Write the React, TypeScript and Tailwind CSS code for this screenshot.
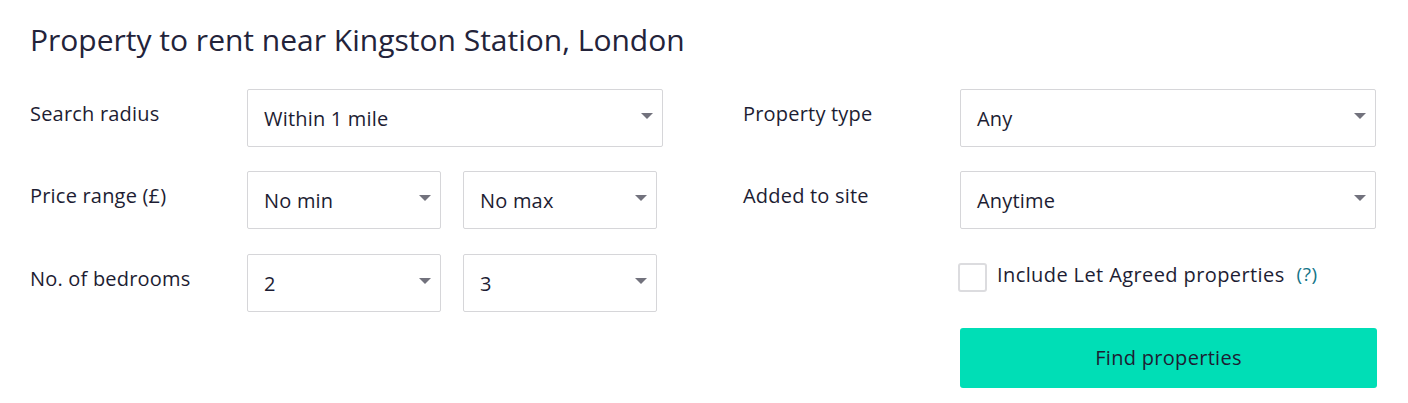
import React from 'react'

const font = { fontFamily: '"Open Sans", Arial, sans-serif' }

function Caret() {
  return (
    <svg width="12" height="6" viewBox="0 0 12 6" className="shrink-0 mb-[4px]">
      <path d="M0 0 L12 0 L6 6 Z" fill="#72727d" />
    </svg>
  )
}

function Select({ value, className = '' }: { value: string; className?: string }) {
  return (
    <div
      className={`h-[58px] flex items-center justify-between pl-4 pr-[9px] bg-white border border-[#d6d6d9] rounded-[2px] text-[20px] tracking-[0.2px] text-[#1d1d33] ${className}`}
    >
      <span className="pt-[1px]">{value}</span>
      <Caret />
    </div>
  )
}

function Label({ children }: { children: React.ReactNode }) {
  return (
    <div className="w-[217px] shrink-0 pt-[10px] text-[20px] leading-[30px] tracking-[0.2px] text-[#1d1d33]">
      {children}
    </div>
  )
}

export default function App() {
  return (
    <div className="w-[1408px] h-[403px] bg-white pl-[30px] pt-[20px]" style={font}>
      <h1 className="text-[30px] leading-[40px] text-[#23233a] tracking-[0px]">
        Property to rent near Kingston Station, London
      </h1>

      <div className="flex mt-[29px] gap-[80px]">
        {/* Left column */}
        <div className="flex flex-col w-[633px]">
          <div className="flex h-[58px]">
            <Label>Search radius</Label>
            <Select value="Within 1 mile" className="w-[416px]" />
          </div>
          <div className="flex h-[58px] mt-[24px]">
            <Label>Price range (£)</Label>
            <div className="flex gap-[22px]">
              <Select value="No min" className="w-[194px]" />
              <Select value="No max" className="w-[194px]" />
            </div>
          </div>
          <div className="flex h-[58px] mt-[25px]">
            <Label>No. of bedrooms</Label>
            <div className="flex gap-[22px]">
              <Select value="2" className="w-[194px]" />
              <Select value="3" className="w-[194px]" />
            </div>
          </div>
        </div>

        {/* Right column */}
        <div className="flex flex-col w-[634px]">
          <div className="flex h-[58px]">
            <Label>Property type</Label>
            <Select value="Any" className="w-[416px]" />
          </div>
          <div className="flex h-[58px] mt-[24px]">
            <Label>Added to site</Label>
            <Select value="Anytime" className="w-[416px]" />
          </div>
          <div className="flex h-[58px] mt-[25px]">
            <div className="w-[215px] shrink-0" />
            <div className="flex items-start pt-[9px]">
              <div className="w-[29px] h-[29px] border-2 border-[#dcdcdf] rounded-[3px] bg-white" />
              <span className="ml-[10px] -mt-[3px] text-[20px] tracking-[0.4px] text-[#1d1d33] leading-[29px]">
                Include Let Agreed properties
              </span>
              <span className="ml-[12px] -mt-[3px] text-[19px] tracking-[0.5px] text-[#137487] leading-[29px]">
                (?)
              </span>
            </div>
          </div>
          <div className="flex mt-[16px]">
            <div className="w-[217px] shrink-0" />
            <button className="w-[417px] h-[60px] bg-[#00deb6] rounded-[3px] text-[20px] tracking-[0.3px] text-[#1d1d33]">
              Find properties
            </button>
          </div>
        </div>
      </div>
    </div>
  )
}
